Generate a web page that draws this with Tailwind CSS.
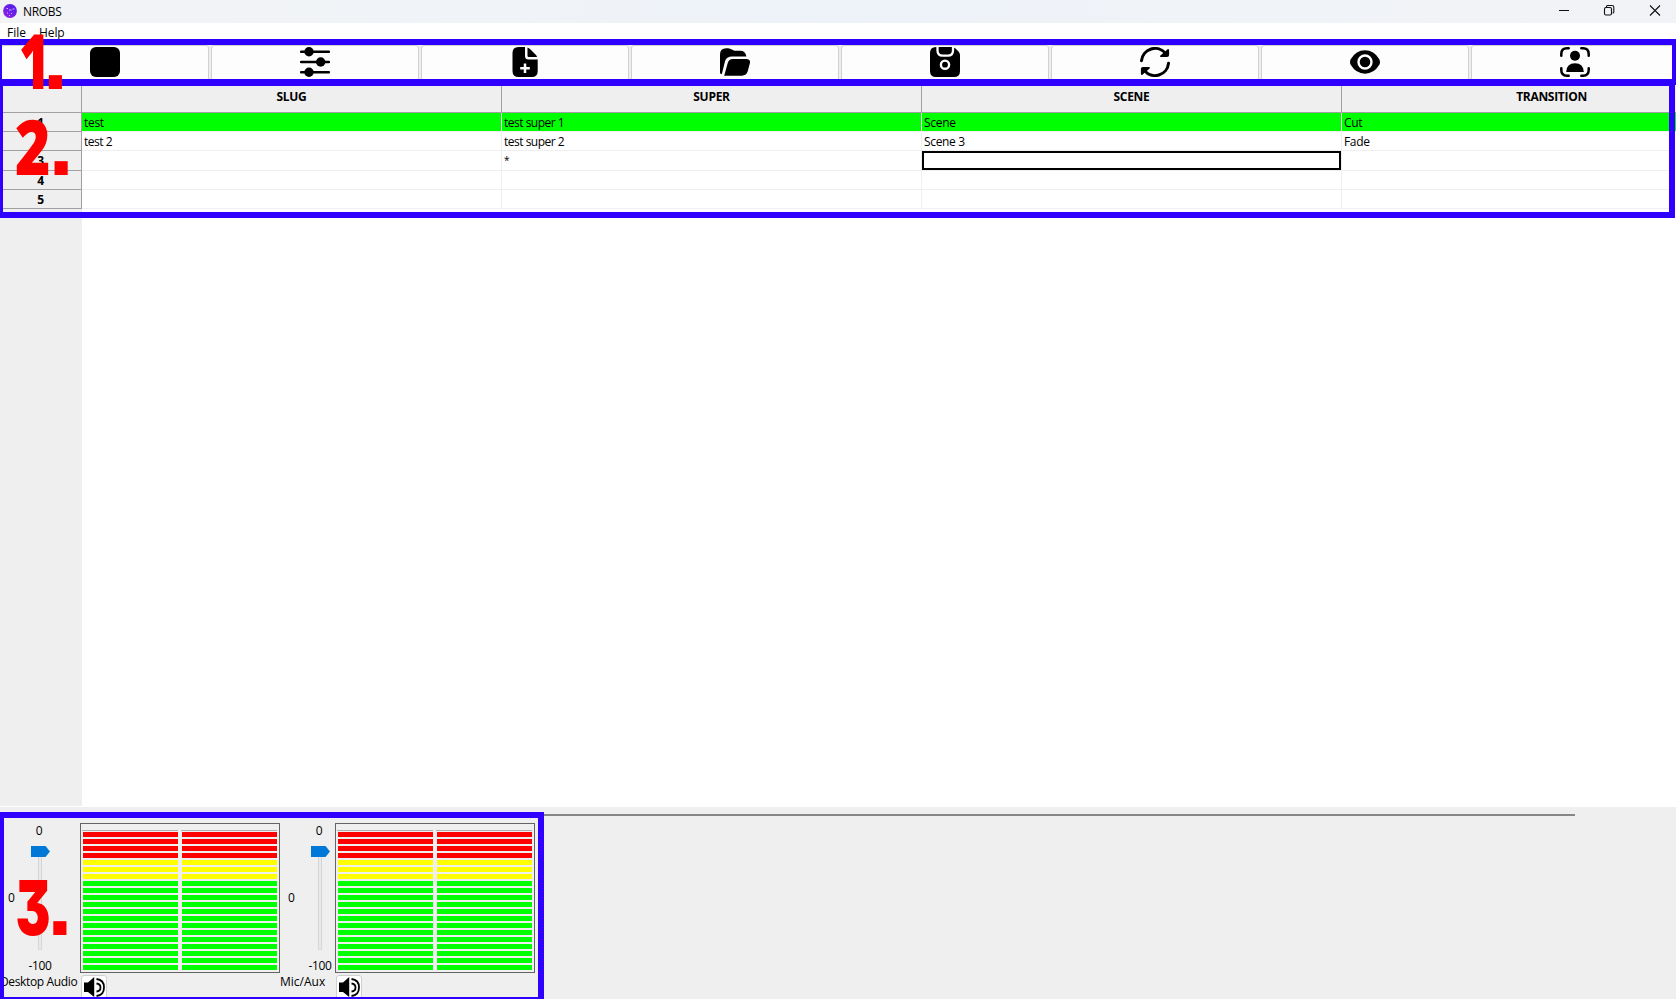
<!DOCTYPE html>
<html lang="en">
<head>
<meta charset="utf-8">
<title>NROBS</title>
<script src="https://cdn.jsdelivr.net/npm/@tailwindcss/browser@4"></script>
</head>
<body class="overflow-hidden bg-white">
<div class="relative flex h-[999px] w-[1676px] flex-col overflow-hidden bg-white font-['Open_Sans',sans-serif] text-[12px] leading-[16px] tracking-[-0.3px] text-black">

  <!-- Title bar -->
  <header class="flex h-[23px] shrink-0 items-center bg-linear-to-r from-[#f2f3f5] via-[#eef3f9] to-[#f2f3f6] pl-[3px]">
    <svg class="-mt-px h-[14px] w-[14px]" viewBox="0 0 14 14"><defs><linearGradient id="ball" x1="1" y1="0" x2="0" y2="1"><stop offset="0" stop-color="#4a1cf0"/><stop offset="1" stop-color="#9322e0"/></linearGradient></defs><circle cx="7" cy="7" r="6.900" fill="url(#ball)"/><path d="M3.500 4.500h1.500M6 6h2.500M9.500 5h2M4 9h1M8 9.500h1M6 11.500h1" stroke="#d9c4ff" stroke-width=".9"/></svg>
    <span class="ml-[6px] mt-px tracking-[-0.35px]">NROBS</span>
    <div class="ml-auto flex items-center pr-[5px]">
      <svg class="-mt-[4px] h-[20px] w-[116px]" viewBox="0 0 116 20" fill="none" stroke="#111" stroke-width="1.100"><path d="M4 10.500h10M95 5.500l10 10M105 5.500l-10 10"/><rect x="49.500" y="7.500" width="7" height="7.500" rx="1.500"/><path d="M51.500 7V6.500q0-1 1-1h4.500q1.800 0 1.800 1.800v4.700q0 1-1 1H57.500"/></svg>
    </div>
  </header>

  <!-- Menu -->
  <nav class="flex h-[22px] shrink-0 bg-white pl-[7px] pt-[2px]">
    <span class="w-[32px] tracking-[0px]">File</span><span class="tracking-[-0.1px]">Help</span>
  </nav>

  <!-- Toolbar -->
  <div class="flex h-[40px] w-[1680px] shrink-0 bg-[#efefef]">
    <button class="mx-px flex h-[36px] w-[208px] items-start justify-center rounded-[3px] border border-[#d0d0d0] bg-[#fdfdfd] pt-px">
      <svg class="h-[30px] w-[30px]" viewBox="0 0 30 30"><rect width="30" height="30" rx="6"/></svg></button>
    <button class="mx-px flex h-[36px] w-[208px] items-start justify-center rounded-[3px] border border-[#d0d0d0] bg-[#fdfdfd] pt-px">
      <svg class="h-[30px] w-[30px]" viewBox="0 0 30 30"><path d="M1 4.700h28M1 15h28M1 25.300h28" stroke="#000" stroke-width="2.400" stroke-linecap="round"/><circle cx="9" cy="4.700" r="4.700"/><circle cx="20.700" cy="15" r="4.700"/><circle cx="9" cy="25.300" r="4.700"/></svg></button>
    <button class="mx-px flex h-[36px] w-[208px] items-start justify-center rounded-[3px] border border-[#d0d0d0] bg-[#fdfdfd] pt-px">
      <svg class="h-[30px] w-[30px]" viewBox="0 0 30 30"><path d="M8.500 0H15v9q0 3.500 3.500 3.500h9.200V24q0 6-6 6h-13q-6.200 0-6.200-6V6q0-6 6-6z"/><path d="M17.500.5q1.500.6 2.500 1.600l5.500 5.500q1 1 1.600 2.400H18.700q-1.200 0-1.200-1.200z"/><path d="M15 16.500v9.500M10.200 21.300h9.600" stroke="#fff" stroke-width="2.500"/></svg></button>
    <button class="mx-px flex h-[36px] w-[208px] items-start justify-center rounded-[3px] border border-[#d0d0d0] bg-[#fdfdfd] pt-px">
      <svg class="h-[30px] w-[30px]" viewBox="0 0 30 30"><path d="M0 25.500V7.500q0-6.300 6.300-6.300h1.500q1.500 0 2.800.7l2.800 1.400q.8.500 2 .5h5q5 0 6 5.800H12q-5.500 0-7 4.600L1.800 27.200Q0 27 0 25.500z"/><path d="M4.200 28.700L7.800 15.800q1-3.900 5-3.900h13.300q4.800 0 3.700 4.600l-2 7.600q-1.200 4.600-6 4.600z"/></svg></button>
    <button class="mx-px flex h-[36px] w-[208px] items-start justify-center rounded-[3px] border border-[#d0d0d0] bg-[#fdfdfd] pt-px">
      <svg class="h-[30px] w-[30px]" viewBox="0 0 30 30"><path d="M6 0h16q2 0 3.500 1.500l3 3Q30 6 30 8v16q0 6-6 6H6q-6 0-6-6V6q0-6 6-6z"/><path d="M7.500 0v3.500q0 5.200 5.200 5.200h5.100q5.200 0 5.200-5.200V0" fill="none" stroke="#fff" stroke-width="2.300"/><circle cx="15" cy="17.700" r="4.100" fill="none" stroke="#fff" stroke-width="2.400"/></svg></button>
    <button class="mx-px flex h-[36px] w-[208px] items-start justify-center rounded-[3px] border border-[#d0d0d0] bg-[#fdfdfd] pt-px">
      <svg class="h-[30px] w-[30px]" viewBox="0 0 30 30" fill="none" stroke="#000" stroke-width="3" stroke-linecap="round"><path d="M1.500 13.700A13.500 13.500 0 0 1 25.500 6.500M28.500 16.300A13.500 13.500 0 0 1 4.500 23.500"/><path d="M28.200 3v5q0 1.200-1.200 1.200h-6zM1.800 27v-5q0-1.200 1.200-1.200h6z" fill="#000" stroke-width="1.800" stroke-linejoin="round"/></svg></button>
    <button class="mx-px flex h-[36px] w-[208px] items-start justify-center rounded-[3px] border border-[#d0d0d0] bg-[#fdfdfd] pt-px">
      <svg class="h-[30px] w-[30px]" viewBox="0 0 30 30"><path d="M.7 12.200Q6 3.300 15 3.300t14.300 8.900q1.400 2.800 0 5.600-5.300 8.900-14.300 8.900T.7 17.800q-1.400-2.800 0-5.600z"/><circle cx="15" cy="15" r="6.500" stroke="#fff" stroke-width="2.400"/></svg></button>
    <button class="mx-px flex h-[36px] w-[208px] items-start justify-center rounded-[3px] border border-[#d0d0d0] bg-[#fdfdfd] pt-px">
      <svg class="h-[30px] w-[30px]" viewBox="0 0 30 30"><path d="M1.300 8.700V7q0-5.700 5.700-5.700h1.700M21.300 1.300H23q5.700 0 5.700 5.700v1.700M28.700 21.300V23q0 5.700-5.700 5.700h-1.700M8.700 28.700H7q-5.700 0-5.700-5.700v-1.700" fill="none" stroke="#000" stroke-width="2.500" stroke-linecap="round"/><circle cx="15" cy="8.700" r="5"/><path d="M6.200 25q.3-8.700 8.800-8.700t8.800 8.700z"/></svg></button>
  </div>

  <!-- Rundown grid -->
  <main class="flex h-[722px] shrink-0 flex-col bg-white">
    <div class="grid h-[28px] shrink-0 grid-cols-[82px_420px_420px_420px_420px] bg-[#efefef] text-center font-bold">
      <div class="border-b border-r border-[#a0a0a0]"></div>
      <div class="border-b border-r border-[#a0a0a0] pt-[4px]">SLUG</div>
      <div class="border-b border-r border-[#a0a0a0] pt-[4px]">SUPER</div>
      <div class="border-b border-r border-[#a0a0a0] pt-[4px]">SCENE</div>
      <div class="border-b border-r border-[#a0a0a0] pt-[4px]">TRANSITION</div>
    </div>
    <div class="grid h-[19px] shrink-0 grid-cols-[82px_420px_420px_420px_420px] tracking-[-0.5px]">
      <div class="border-b border-r border-[#a0a0a0] bg-[#efefef] pt-[2px] text-center font-bold">1</div>
      <div class="border-b border-r border-[#efefef] bg-[#00ff00] pl-[2px] pt-[2px] tracking-[-0.3px]">test</div>
      <div class="border-b border-r border-[#efefef] bg-[#00ff00] pl-[2px] pt-[2px]">test super 1</div>
      <div class="border-b border-r border-[#efefef] bg-[#00ff00] pl-[2px] pt-[2px] tracking-[-0.3px]">Scene</div>
      <div class="border-b border-r border-[#efefef] bg-[#00ff00] pl-[2px] pt-[2px] tracking-[-0.3px]">Cut</div>
    </div>
    <div class="grid h-[19px] shrink-0 grid-cols-[82px_420px_420px_420px_420px] tracking-[-0.5px]">
      <div class="border-b border-r border-[#a0a0a0] bg-[#efefef] text-center font-bold"></div>
      <div class="border-b border-r border-[#efefef] pl-[2px] pt-[2px]">test 2</div>
      <div class="border-b border-r border-[#efefef] pl-[2px] pt-[2px]">test super 2</div>
      <div class="border-b border-r border-[#efefef] pl-[2px] pt-[2px] tracking-[-0.35px]">Scene 3</div>
      <div class="border-b border-r border-[#efefef] pl-[2px] pt-[2px] tracking-[-0.35px]">Fade</div>
    </div>
    <div class="grid h-[20px] shrink-0 grid-cols-[82px_420px_420px_420px_420px]">
      <div class="border-b border-r border-[#a0a0a0] bg-[#efefef] pt-[2px] text-center font-bold">3</div>
      <div class="border-b border-r border-[#efefef]"></div>
      <div class="border-b border-r border-[#efefef] pl-[2px] pt-px text-[10px]">*</div>
      <div class="border-b border-r border-[#efefef]"><div class="h-[19px] border-2 border-black"></div></div>
      <div class="border-b border-r border-[#efefef]"></div>
    </div>
    <div class="grid h-[19px] shrink-0 grid-cols-[82px_420px_420px_420px_420px]">
      <div class="border-b border-r border-[#a0a0a0] bg-[#efefef] pt-[2px] text-center font-bold">4</div>
      <div class="border-b border-r border-[#efefef]"></div><div class="border-b border-r border-[#efefef]"></div><div class="border-b border-r border-[#efefef]"></div><div class="border-b border-r border-[#efefef]"></div>
    </div>
    <div class="grid h-[19px] shrink-0 grid-cols-[82px_420px_420px_420px_420px]">
      <div class="border-b border-r border-[#a0a0a0] bg-[#efefef] pt-[2px] text-center font-bold">5</div>
      <div class="border-b border-r border-[#efefef]"></div><div class="border-b border-r border-[#efefef]"></div><div class="border-b border-r border-[#efefef]"></div><div class="border-b border-r border-[#efefef]"></div>
    </div>
    <div class="mb-px w-[82px] flex-1 bg-[#efefef]"></div>
  </main>

  <!-- Audio mixer -->
  <footer class="flex flex-1 bg-[#efefef]">
    <section class="flex w-[280px] shrink-0 pt-[16px]">
      <div class="flex w-[80px] shrink-0 flex-col">
        <div class="flex h-[150px]">
          <span class="w-[30px] pl-[8px] pt-[67px]">0</span>
          <div class="flex w-[20px] flex-col items-center">
            <span class="-ml-[2px]">0</span>
            <svg class="mt-[7px] h-[105px] w-[20px] shrink-0" viewBox="0 0 20 105"><rect x="8.500" y="8.500" width="3" height="95" fill="#e7eaea" stroke="#d6d6d6"/><path d="M1 0h14.500l4.500 5.500-4.500 5.500H1z" fill="#0078d7"/></svg>
            <span class="mt-[7px]">-100</span>
          </div>
        </div>
        <span class="mt-px whitespace-nowrap tracking-[-0.35px]">Desktop Audio</span>
      </div>
      <div class="flex w-[200px] shrink-0 flex-col">
        <div class="meter flex h-[150px] shrink-0 gap-[3px] border border-[#646464] px-px pt-[6px]"></div>
        <div class="ml-px mt-[2px] h-[26px] w-[26px] shrink-0 rounded-[3px] border border-[#d0d0d0] bg-[#fdfdfd] px-[2px] pt-px">
          <svg class="h-[21px] w-[21px]" viewBox="0 0 21 21"><path d="M0 5.500h4L10.200 0v20L4 15H0z"/><path d="M12.500 6.500q4 .3 4 4t-4 4M12.500 2q7.500.8 7.500 8.500T12.500 19" fill="none" stroke="#000" stroke-width="1.800"/></svg>
        </div>
      </div>
    </section>
    <section class="flex w-[264px] shrink-0 pt-[16px]">
      <div class="flex w-[55px] shrink-0 flex-col">
        <div class="flex h-[150px]">
          <span class="w-[30px] pl-[8px] pt-[67px]">0</span>
          <div class="flex w-[20px] flex-col items-center">
            <span class="-ml-[2px]">0</span>
            <svg class="mt-[7px] h-[105px] w-[20px] shrink-0" viewBox="0 0 20 105"><rect x="8.500" y="8.500" width="3" height="95" fill="#e7eaea" stroke="#d6d6d6"/><path d="M1 0h14.500l4.500 5.500-4.500 5.500H1z" fill="#0078d7"/></svg>
            <span class="mt-[7px]">-100</span>
          </div>
        </div>
        <span class="mt-px whitespace-nowrap tracking-[0px]">Mic/Aux</span>
      </div>
      <div class="flex w-[200px] shrink-0 flex-col">
        <div class="meter flex h-[150px] shrink-0 gap-[3px] border border-[#646464] px-px pt-[6px]"></div>
        <div class="ml-px mt-[2px] h-[26px] w-[26px] shrink-0 rounded-[3px] border border-[#d0d0d0] bg-[#fdfdfd] px-[2px] pt-px">
          <svg class="h-[21px] w-[21px]" viewBox="0 0 21 21"><path d="M0 5.500h4L10.200 0v20L4 15H0z"/><path d="M12.500 6.500q4 .3 4 4t-4 4M12.500 2q7.500.8 7.500 8.500T12.500 19" fill="none" stroke="#000" stroke-width="1.800"/></svg>
        </div>
      </div>
    </section>
    <div class="mt-[7px] h-[2px] w-[1031px] bg-[#868686]"></div>
  </footer>

  <!-- Annotation frames and numbers -->
  <div class="absolute left-0 top-[39px] h-[46px] w-[1676px] border-b-[6px] border-l-[2px] border-r-[4px] border-t-[6px] border-[#2f00ff]"></div>
  <div class="absolute left-0 top-[79px] h-[139px] w-[1675px] border-b-[6px] border-l-[3px] border-r-[6px] border-t-[7px] border-[#2f00ff]"></div>
  <div class="absolute left-0 top-[812px] h-[187px] w-[544px] border-b-[2px] border-l-[4px] border-r-[6px] border-t-[6px] border-[#2f00ff]"></div>
  <svg class="absolute left-0 top-0 h-[999px] w-[80px] font-['Open_Sans',sans-serif] font-extrabold tracking-normal" viewBox="0 0 80 999" fill="#f00" font-size="76">
    <text y="89"><tspan x="19" textLength="31" lengthAdjust="spacingAndGlyphs">1</tspan><tspan class="font-['Liberation_Sans',sans-serif] font-bold" x="42.500" font-size="93">.</tspan></text>
    <text y="175"><tspan x="15" textLength="35.500" lengthAdjust="spacingAndGlyphs">2</tspan><tspan class="font-['Liberation_Sans',sans-serif] font-bold" x="48.200" font-size="93">.</tspan></text>
    <text y="934.500"><tspan class="font-['Inter',sans-serif] font-black [font-feature-settings:'cv09']" x="15.500" textLength="35" lengthAdjust="spacingAndGlyphs">3</tspan><tspan class="font-['Liberation_Sans',sans-serif] font-bold" x="47" font-size="93">.</tspan></text>
  </svg>
</div>
<script>
  const bars = Array.from({ length: 20 }, (_, i) => {
    const c = i < 4 ? 'bg-[#ff0000]' : i < 7 ? 'bg-[#ffff00]' : 'bg-[#00ff00]';
    return `<div class="h-[5px] shrink-0 ${c}"></div>`;
  }).join('');
  document.querySelectorAll('.meter').forEach(m => {
    m.innerHTML = `<div class="flex w-[96px] flex-col gap-[2px] border-t border-[#b0b0b0] pl-px pt-px">${bars}</div>`.repeat(2);
  });
</script>
</body>
</html>
